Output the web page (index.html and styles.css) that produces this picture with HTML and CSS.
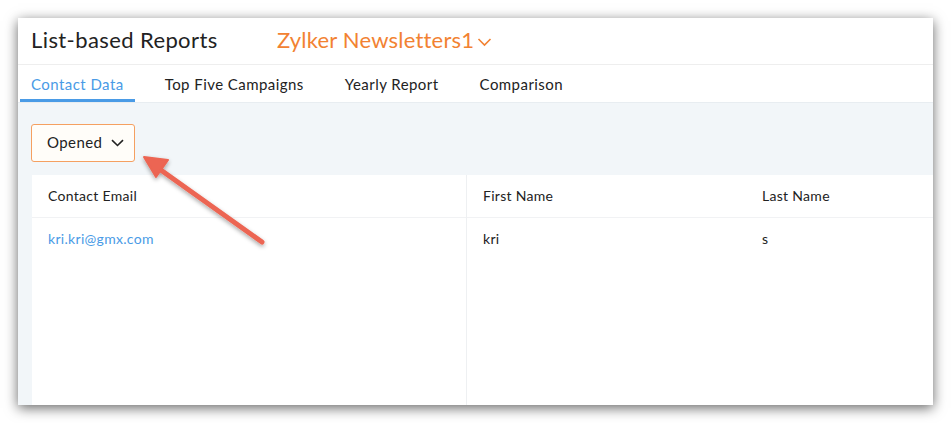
FILE: index.html
```html
<!DOCTYPE html>
<html>
<head>
<meta charset="utf-8">
<link rel="stylesheet" href="styles.css">
</head>
<body>
<div class="window">
  <div class="header">
    <span class="title">List-based Reports</span>
    <span class="list-name">Zylker Newsletters1<svg class="chev-o" width="15" height="10" viewBox="0 0 15 10"><path d="M1.5 2 L7.5 8 L13.5 2" fill="none" stroke="#f28232" stroke-width="1.6"/></svg></span>
  </div>
  <div class="tabs">
    <div class="tab active">Contact Data</div>
    <div class="tab">Top Five Campaigns</div>
    <div class="tab">Yearly Report</div>
    <div class="tab">Comparison</div>
  </div>
  <div class="content">
    <div class="toolbar">
      <button class="dropdown">Opened<svg width="13" height="8" viewBox="0 0 13 8"><path d="M1 1.2 L6.5 6.5 L12 1.2" fill="none" stroke="#222" stroke-width="1.6"/></svg></button>
    </div>
    <div class="table">
      <div class="col col-email">
        <div class="cell head">Contact Email</div>
        <div class="cell"><a class="email">kri.kri@gmx.com</a></div>
      </div>
      <div class="col col-rest">
        <div class="row head">
          <div class="cell c-first">First Name</div>
          <div class="cell c-last">Last Name</div>
        </div>
        <div class="row">
          <div class="cell c-first">kri</div>
          <div class="cell c-last">s</div>
        </div>
      </div>
    </div>
  </div>
</div>
<svg class="arrow" width="951" height="423" viewBox="0 0 951 423">
  <defs>
    <filter id="sh" x="-20%" y="-20%" width="140%" height="140%">
      <feDropShadow dx="0" dy="2" stdDeviation="2" flood-color="#000" flood-opacity="0.35"/>
    </filter>
  </defs>
  <g filter="url(#sh)">
    <line x1="262" y1="242" x2="158" y2="168" stroke="#ec6552" stroke-width="5" stroke-linecap="round"/>
    <polygon points="144,157 168,160 156,177" fill="#ec6552" stroke="#ec6552" stroke-width="2" stroke-linejoin="round"/>
  </g>
</svg>
</body>
</html>
```

FILE: styles.css
```css
html, body {
  margin: 0;
  padding: 0;
  background: #ffffff;
}
body {
  width: 951px;
  height: 423px;
  overflow: hidden;
  padding: 18px 0 0 18px;
  box-sizing: border-box;
  font-family: "Lato", "Open Sans", sans-serif;
  color: #222;
  letter-spacing: 0.3px;
}
.window {
  width: 915px;
  height: 387px;
  background: #fff;
  box-shadow: 0 3px 12px rgba(0,0,0,0.6);
  display: flex;
  flex-direction: column;
  overflow: hidden;
}
.header {
  height: 47px;
  box-sizing: border-box;
  border-bottom: 1px solid #eeeeee;
  display: flex;
  align-items: center;
  padding-left: 13px;
  padding-bottom: 3px;
}
.title {
  font-size: 22px;
  color: #222;
  width: 246px;
  letter-spacing: 0.4px;
}
.list-name {
  font-size: 22px;
  color: #f28232;
  display: flex;
  align-items: center;
  letter-spacing: 0.2px;
}
.chev-o { margin-left: 3px; margin-top: 4px; }
.tabs {
  height: 38px;
  box-sizing: border-box;
  display: flex;
  gap: 19px;
  padding-left: 2px;
  border-bottom: 1px solid #e8edf1;
}
.tab {
  padding: 0 11px;
  font-size: 15px;
  line-height: 37px;
  color: #222;
  border-bottom: 3px solid transparent;
  height: 37px;
  box-sizing: border-box;
  padding-top: 1px;
  letter-spacing: 0.45px;
}
.tab.active {
  color: #4a9be6;
  border-bottom-color: #4a9be6;
}
.content {
  flex: 1;
  background: #f2f6f9;
  display: flex;
  flex-direction: column;
}
.toolbar {
  padding: 21px 0 13px 13px;
}
.dropdown {
  width: 104px;
  height: 38px;
  border: 1px solid #f5a061;
  border-radius: 3px;
  background: #fffdf9;
  font-family: inherit;
  font-size: 15px;
  letter-spacing: 0.4px;
  color: #222;
  display: flex;
  align-items: center;
  padding: 0 0 3px 15px;
  gap: 9px;
}
.dropdown svg { margin-top: 3px; }
.table {
  flex: 1;
  margin-left: 14px;
  background: #fff;
  display: flex;
}
.col-email {
  width: 434px;
  border-right: 1px solid #eef0f2;
}
.col-rest { flex: 1; }
.row { display: flex; }
.cell {
  height: 43px;
  box-sizing: border-box;
  padding: 12px 16px 0 16px;
  font-size: 14px;
  color: #222;
}
.head {
  border-bottom: 1px solid #f1f2f4;
}
.cell.c-first { width: 279px; }
.c-last { flex: 1; }
.row.head .cell { height: 42px; }
.email { color: #4a9be6; }
.arrow {
  position: absolute;
  left: 0;
  top: 0;
  pointer-events: none;
}
```
